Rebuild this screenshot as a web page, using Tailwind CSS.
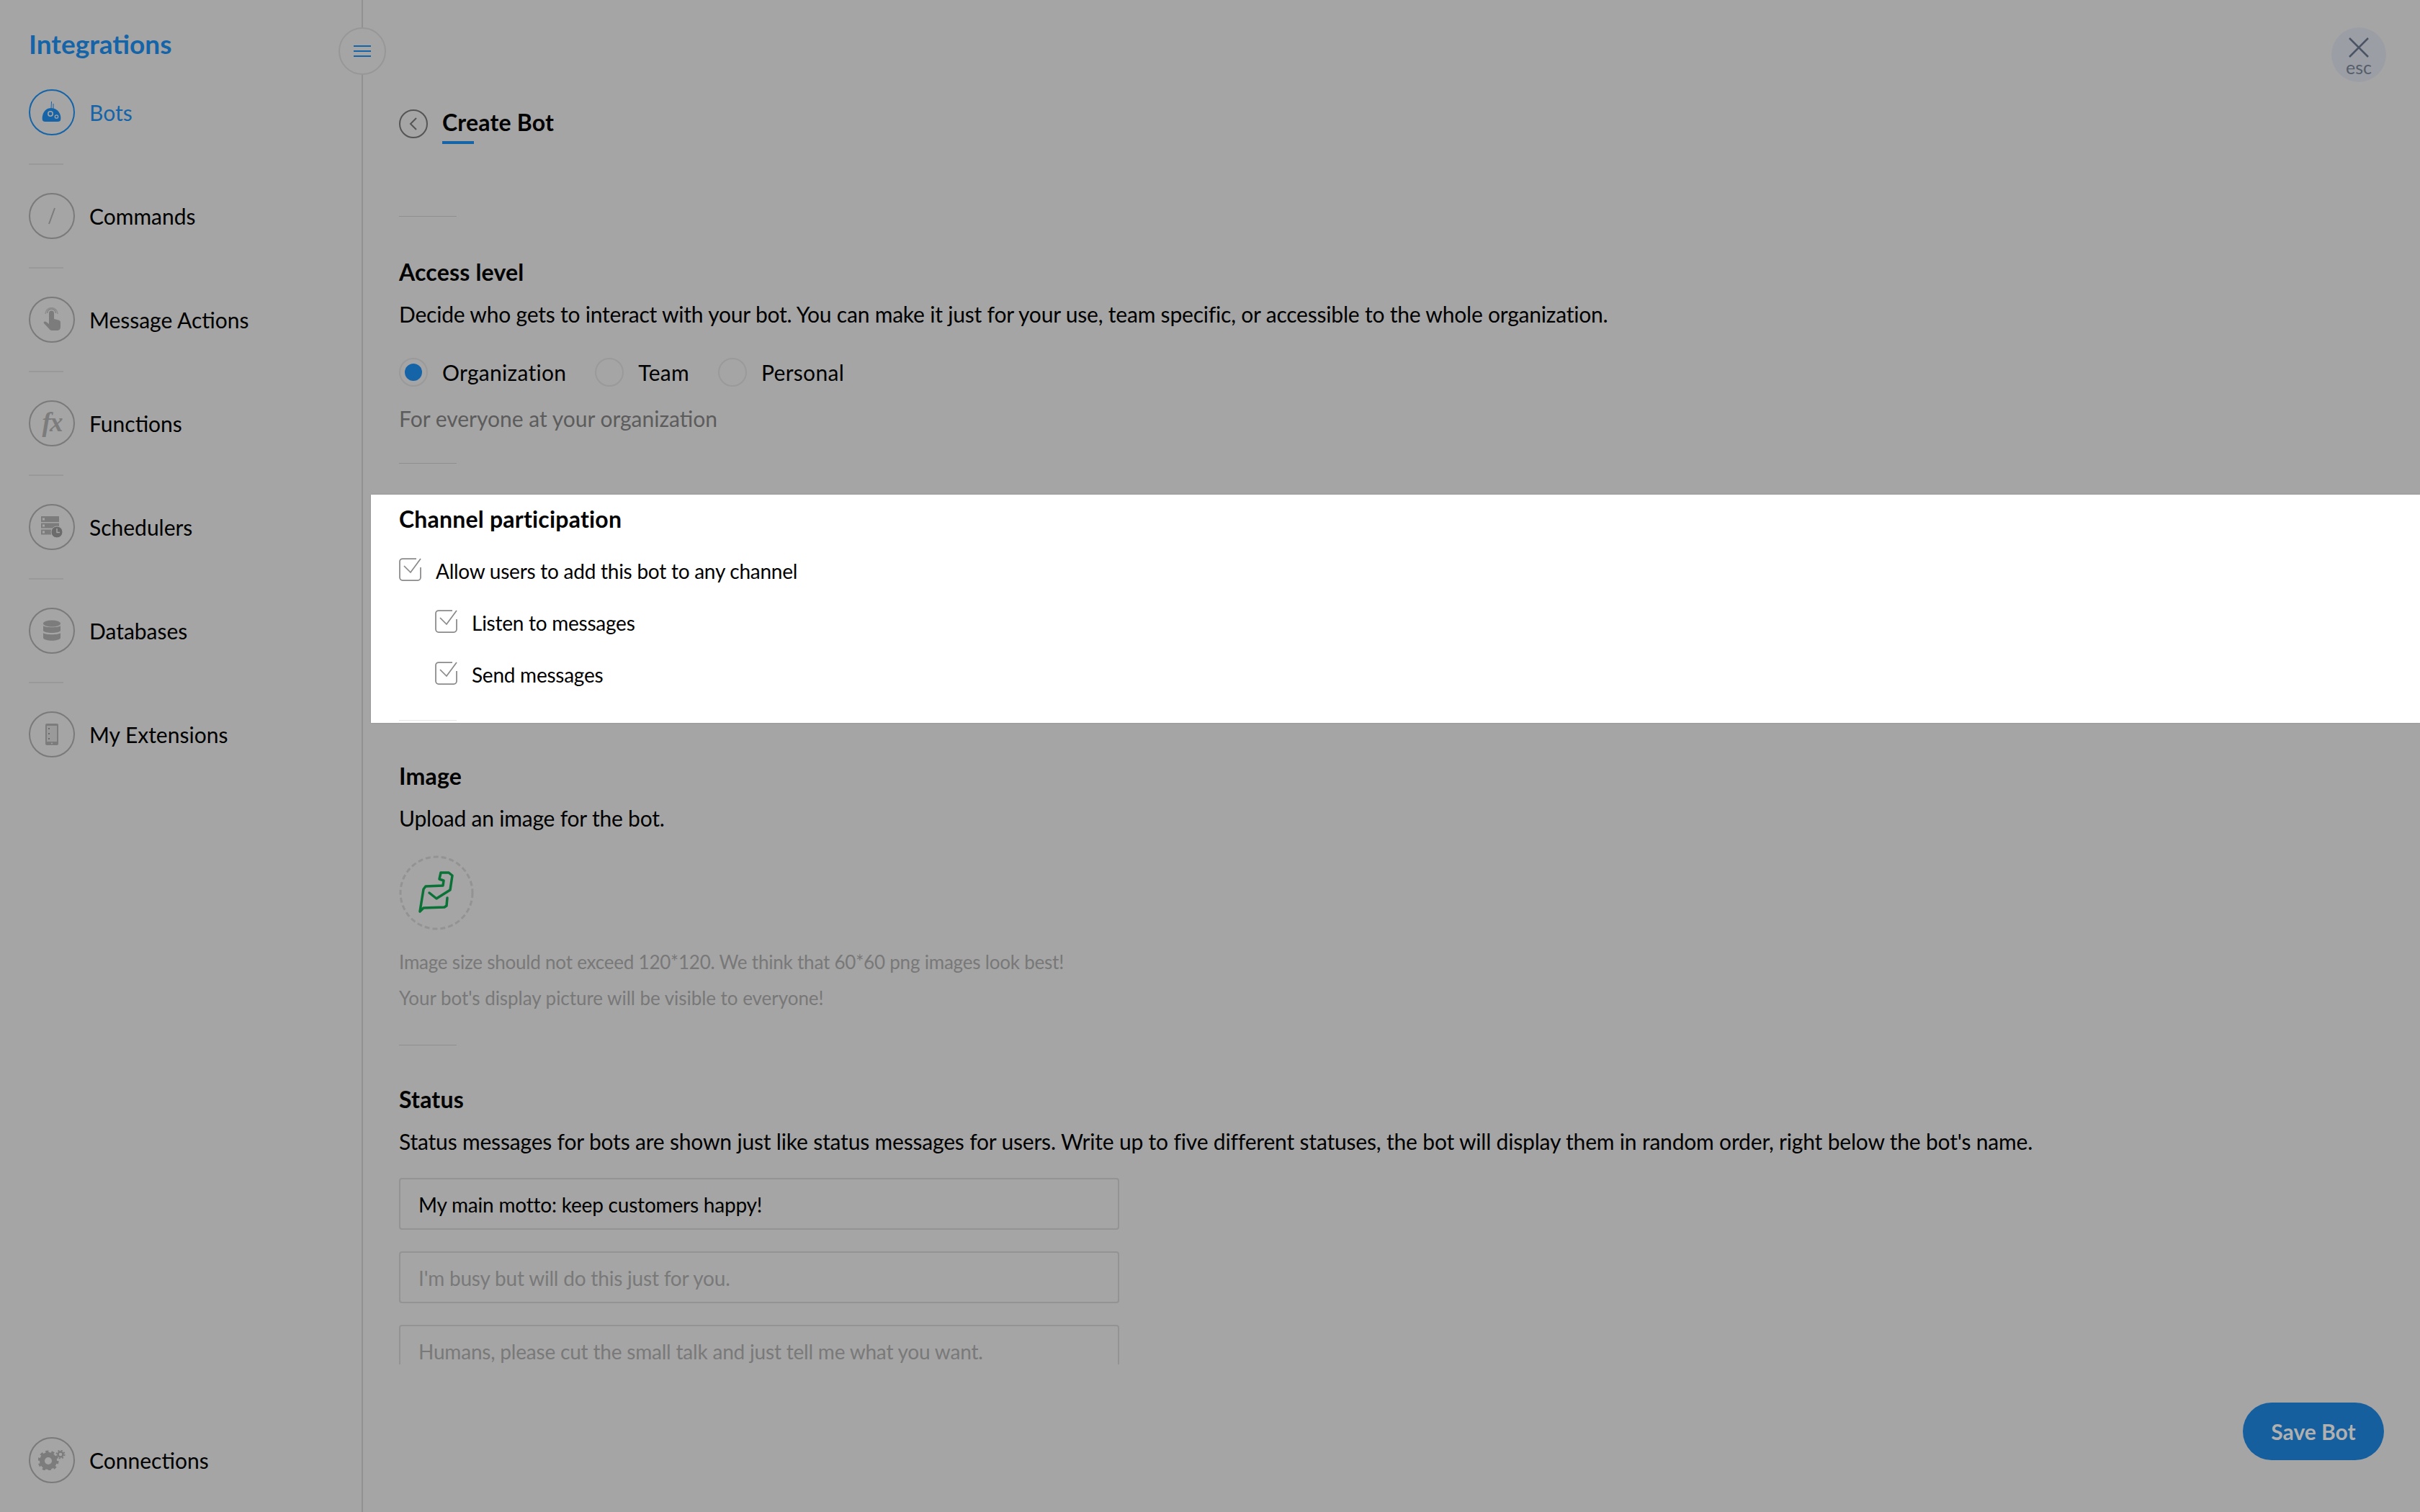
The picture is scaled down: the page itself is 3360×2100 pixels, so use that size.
<!DOCTYPE html>
<html lang="en">
<head>
  <meta charset="UTF-8">
  <meta name="viewport" content="width=device-width, initial-scale=1.0">
  <title>Create Bot</title>
  <script src="https://cdn.jsdelivr.net/npm/@tailwindcss/browser@4"></script>
</head>
<body class="bg-[#a5a5a5] text-black font-['Lato',sans-serif] w-[3360px] h-[2100px] overflow-hidden relative flex">

  <!-- Sidebar -->
  <aside class="w-[504px] h-full shrink-0 border-r-2 border-[#919191] pl-[40px] flex flex-col">
    <h1 class="mt-[40px] h-[44px] leading-[42px] text-[37px] font-bold text-[#1664a8]">Integrations</h1>
    <ul class="mt-[40px] flex flex-col text-[30px]">
      <li class="flex items-center gap-[20px] h-[64px] text-[#1664a8]">
        <span class="w-[64px] h-[64px] rounded-full border-2 border-[#1664a8] flex items-center justify-center">
          <svg width="30" height="34" viewBox="0 0 30 34"><path d="M14 12 14.5 2M17 12 17 5" stroke="#1664a8" stroke-width="1" fill="none"/><path d="M2 28C.5 22 4 11 14 11c9 0 15 9 13 17-1 2-3 2-6 2H7c-2 0-4 0-5-2z" fill="#1664a8"/><circle cx="13" cy="19" r="3.2" fill="none" stroke="#a5a5a5" stroke-width="1.6"/><circle cx="21.500" cy="23" r="2.200" fill="none" stroke="#a5a5a5" stroke-width="1.300"/></svg>
        </span>
        <span>Bots</span>
      </li>
      <li class="w-[48px] h-[2px] bg-[#999999] my-[39px]"></li>
      <li class="flex items-center gap-[20px] h-[64px]">
        <span class="w-[64px] h-[64px] rounded-full border-2 border-[#7a7a7a] flex items-center justify-center">
          <svg width="14" height="28" viewBox="0 0 14 28"><path d="M11 3 3 25" stroke="#7c7c7c" stroke-width="2" fill="none"/></svg>
        </span>
        <span>Commands</span>
      </li>
      <li class="w-[48px] h-[2px] bg-[#999999] my-[39px]"></li>
      <li class="flex items-center gap-[20px] h-[64px]">
        <span class="w-[64px] h-[64px] rounded-full border-2 border-[#7a7a7a] flex items-center justify-center">
          <svg width="28" height="34" viewBox="0 0 28 34"><path d="M7.500 8a6 6 0 0 1 12 0" stroke="#848484" stroke-width="1.500" fill="none"/><path d="M5 9a8.500 8.500 0 0 1 17 0" stroke="#8c8c8c" stroke-width="1.500" fill="none"/><path d="M10 8a3.500 3.500 0 0 1 7 0v8l6 1.500c2 .5 3 1.500 3 3.500v6c0 3-2 5-5 5h-7c-2 0-3-1-4-2.500L3 22c-1-2 1-3.500 3-2l4 3z" fill="#7c7c7c"/></svg>
        </span>
        <span>Message Actions</span>
      </li>
      <li class="w-[48px] h-[2px] bg-[#999999] my-[39px]"></li>
      <li class="flex items-center gap-[20px] h-[64px]">
        <span class="w-[64px] h-[64px] rounded-full border-2 border-[#7a7a7a] flex items-center justify-center">
          <span class="font-['Liberation_Serif',serif] italic font-bold text-[37px] tracking-[-2px] leading-none text-[#7c7c7c] pb-[4px]">fx</span>
        </span>
        <span>Functions</span>
      </li>
      <li class="w-[48px] h-[2px] bg-[#999999] my-[39px]"></li>
      <li class="flex items-center gap-[20px] h-[64px]">
        <span class="w-[64px] h-[64px] rounded-full border-2 border-[#7a7a7a] flex items-center justify-center">
          <svg width="32" height="32" viewBox="0 0 32 32"><rect x="1" y="1" width="25" height="8" fill="#7c7c7c"/><rect x="1" y="10.500" width="25" height="7" fill="#7c7c7c"/><rect x="1" y="19.500" width="14" height="7" fill="#7c7c7c"/><rect x="3" y="3.500" width="3" height="3" fill="#a5a5a5"/><rect x="3" y="12.500" width="3" height="3" fill="#a5a5a5"/><rect x="3" y="21.500" width="3" height="3" fill="#a5a5a5"/><circle cx="23" cy="23" r="8" fill="#6b6b6b" stroke="#a5a5a5" stroke-width="1"/><path d="M23 18v5.500h4" stroke="#a5a5a5" stroke-width="1.500" fill="none"/></svg>
        </span>
        <span>Schedulers</span>
      </li>
      <li class="w-[48px] h-[2px] bg-[#999999] my-[39px]"></li>
      <li class="flex items-center gap-[20px] h-[64px]">
        <span class="w-[64px] h-[64px] rounded-full border-2 border-[#7a7a7a] flex items-center justify-center">
          <svg width="26" height="30" viewBox="0 0 26 30"><ellipse cx="13" cy="5" rx="12" ry="4.500" fill="#7c7c7c"/><path d="M1 8c2 3 22 3 24 0v7c-2 4-22 4-24 0zM1 18c2 3 22 3 24 0v7c-2 5-22 5-24 0z" fill="#7c7c7c"/></svg>
        </span>
        <span>Databases</span>
      </li>
      <li class="w-[48px] h-[2px] bg-[#999999] my-[39px]"></li>
      <li class="flex items-center gap-[20px] h-[64px]">
        <span class="w-[64px] h-[64px] rounded-full border-2 border-[#7a7a7a] flex items-center justify-center">
          <svg width="20" height="30" viewBox="0 0 20 30"><rect x="1" y="0" width="18" height="30" rx="2" fill="#7c7c7c"/><rect x="3" y="3" width="14" height="22" fill="#9a9a9a"/><rect x="5" y="6" width="2" height="2" fill="#6b6b6b"/><rect x="5" y="13" width="2" height="2" fill="#6b6b6b"/><rect x="5" y="20" width="2" height="2" fill="#6b6b6b"/><circle cx="10" cy="27.500" r="1" fill="#a5a5a5"/></svg>
        </span>
        <span>My Extensions</span>
      </li>
    </ul>
    <div class="mt-auto mb-[40px] flex items-center gap-[20px] h-[64px] text-[30px]">
      <span class="w-[64px] h-[64px] rounded-full border-2 border-[#7a7a7a] flex items-center justify-center">
        <svg width="38" height="28" viewBox="0 0 38 28"><circle cx="14" cy="15" r="8.500" fill="none" stroke="#7c7c7c" stroke-width="7"/><circle cx="14" cy="15" r="12.500" fill="none" stroke="#7c7c7c" stroke-width="4" stroke-dasharray="4 3.850"/><circle cx="31" cy="6" r="3.500" fill="none" stroke="#7c7c7c" stroke-width="2.500"/><circle cx="31" cy="6" r="5.500" fill="none" stroke="#7c7c7c" stroke-width="2" stroke-dasharray="2 2.320"/></svg>
      </span>
      <span>Connections</span>
    </div>
  </aside>

  <!-- Sidebar toggle -->
  <button class="absolute left-[470px] top-[38px] w-[66px] h-[66px] rounded-full border-2 border-[#979797] bg-[#a5a5a5] flex flex-col items-center justify-center gap-[5px]">
    <span class="w-[24px] h-[2px] bg-[#1664a8]"></span>
    <span class="w-[24px] h-[2px] bg-[#1664a8]"></span>
    <span class="w-[24px] h-[2px] bg-[#1664a8]"></span>
  </button>

  <!-- Close -->
  <button class="absolute left-[3237px] top-[38px] w-[76px] h-[76px] rounded-full bg-[#9b9fa5] flex flex-col items-center pt-[13px]">
    <svg width="30" height="30" viewBox="0 0 30 30"><path d="M2 2 28 28M28 2 2 28" stroke="#4b5364" stroke-width="2.500" fill="none"/></svg>
    <span class="text-[25px] leading-[22px] text-[#565d6b] mt-[1px]">esc</span>
  </button>

  <!-- Main Content -->
  <main class="flex-1 flex flex-col">
    <div class="h-[1895px] overflow-hidden">

      <!-- Title -->
      <div class="pl-[50px] pt-[152px] flex items-start gap-[20px]">
        <span class="w-[40px] h-[40px] rounded-full border-2 border-[#555555] flex items-center justify-center">
          <svg width="12" height="20" viewBox="0 0 12 20"><path d="M10 2 2 10l8 8" stroke="#555555" stroke-width="2" fill="none"/></svg>
        </span>
        <div>
          <div class="h-[40px] leading-[36px] text-[32px] tracking-[0.2px] font-bold">Create Bot</div>
          <div class="w-[44px] h-[4px] bg-[#1664a8] mt-[4px]"></div>
        </div>
      </div>

      <div class="ml-[50px] mt-[100px] w-[80px] h-[1px] bg-[#8f8f8f]"></div>

      <!-- Access level -->
      <section class="pl-[50px] text-[30px] tracking-[-0.2px] leading-[40px]">
        <h2 class="mt-[58px] text-[32px] tracking-[0.2px] leading-[38px] font-bold">Access level</h2>
        <p class="mt-[19px]">Decide who gets to interact with your bot. You can make it just for your use, team specific, or accessible to the whole organization.</p>
        <div class="mt-[41px] flex items-center h-[40px] tracking-[0.3px]">
          <span class="w-[40px] h-[40px] rounded-full border-2 border-[#9a9a9a] flex items-center justify-center"><span class="w-[24px] h-[24px] rounded-full bg-[#1664a8]"></span></span>
          <span class="ml-[20px]">Organization</span>
          <span class="ml-[40px] w-[40px] h-[40px] rounded-full border-2 border-[#9a9a9a]"></span>
          <span class="ml-[20px]">Team</span>
          <span class="ml-[40px] w-[40px] h-[40px] rounded-full border-2 border-[#9a9a9a]"></span>
          <span class="ml-[20px]">Personal</span>
        </div>
        <p class="mt-[24px] tracking-normal text-[#5c5c5c]">For everyone at your organization</p>
        <div class="mt-[42px] w-[80px] h-[1px] bg-[#8f8f8f]"></div>
      </section>

      <!-- Channel participation -->
      <section class="ml-[11px] mt-[43px] h-[317px] bg-white pl-[39px] pt-[16px] text-[28px] tracking-[-0.25px] leading-[36px] shadow-[0_0_2px_rgba(0,0,0,0.15)]">
        <h2 class="text-[32px] tracking-[0.2px] font-bold">Channel participation</h2>
        <label class="mt-[36px] flex items-start gap-[19px]">
          <svg width="32" height="32" viewBox="0 0 32 32" class="shrink-0"><path d="M24 1H5a4 4 0 0 0-4 4v22a4 4 0 0 0 4 4h21a4 4 0 0 0 4-4V13" fill="none" stroke="#8a8a8a" stroke-width="1.750"/><path d="M7 11l9 9L30 1" fill="none" stroke="#8a8a8a" stroke-width="1.750"/></svg>
          <span>Allow users to add this bot to any channel</span>
        </label>
        <label class="mt-[36px] ml-[50px] flex items-start gap-[19px]">
          <svg width="32" height="32" viewBox="0 0 32 32" class="shrink-0"><path d="M24 1H5a4 4 0 0 0-4 4v22a4 4 0 0 0 4 4h21a4 4 0 0 0 4-4V13" fill="none" stroke="#8a8a8a" stroke-width="1.750"/><path d="M7 11l9 9L30 1" fill="none" stroke="#8a8a8a" stroke-width="1.750"/></svg>
          <span>Listen to messages</span>
        </label>
        <label class="mt-[36px] ml-[50px] flex items-start gap-[19px]">
          <svg width="32" height="32" viewBox="0 0 32 32" class="shrink-0"><path d="M24 1H5a4 4 0 0 0-4 4v22a4 4 0 0 0 4 4h21a4 4 0 0 0 4-4V13" fill="none" stroke="#8a8a8a" stroke-width="1.750"/><path d="M7 11l9 9L30 1" fill="none" stroke="#8a8a8a" stroke-width="1.750"/></svg>
          <span>Send messages</span>
        </label>
        <div class="mt-[45px] w-[80px] h-[1px] bg-[#e6e6e6]"></div>
      </section>

      <!-- Image -->
      <section class="pl-[50px] text-[30px] tracking-[-0.2px] leading-[40px]">
        <h2 class="mt-[55px] text-[32px] tracking-[0.2px] leading-[38px] font-bold">Image</h2>
        <p class="mt-[19px]">Upload an image for the bot.</p>
        <div class="mt-[32px] w-[104px] h-[104px]">
          <svg width="104" height="104" viewBox="0 0 104 104"><circle cx="52" cy="52" r="50" fill="none" stroke="#939393" stroke-width="3" stroke-dasharray="7 4"/><path d="M29 78 34 47 37 43 61 42 62 35 56 33 58 24 69 24 74 28 71 48 52 60 42 52M67 59 66 70 63 72 34 73 29 78" fill="none" stroke="#0a7236" stroke-width="3.500" stroke-linejoin="round" stroke-linecap="round"/></svg>
        </div>
        <p class="mt-[19px] text-[26px] tracking-[-0.21px] leading-[50px] text-[#787878]">Image size should not exceed 120*120. We think that 60*60 png images look best!</p>
        <p class="text-[26px] tracking-[-0.04px] leading-[50px] text-[#787878]">Your bot's display picture will be visible to everyone!</p>
        <div class="mt-[40px] w-[80px] h-[1px] bg-[#8f8f8f]"></div>
      </section>

      <!-- Status -->
      <section class="pl-[50px] text-[30px] tracking-[-0.18px] leading-[40px]">
        <h2 class="mt-[56px] text-[32px] tracking-[0.2px] leading-[38px] font-bold">Status</h2>
        <p class="mt-[19px]">Status messages for bots are shown just like status messages for users. Write up to five different statuses, the bot will display them in random order, right below the bot's name.</p>
        <div class="mt-[31px] w-[1000px] flex flex-col gap-[30px] text-[28px] tracking-[-0.2px]">
          <div class="h-[72px] pl-[25px] pt-[2px] flex items-center rounded-[4px] border-2 border-[#939393]">My main motto: keep customers happy!</div>
          <div class="h-[72px] pl-[25px] pt-[2px] flex items-center rounded-[4px] border-2 border-[#939393] text-[#797979]">I'm busy but will do this just for you.</div>
          <div class="h-[72px] pl-[25px] pt-[2px] flex items-center rounded-[4px] border-2 border-[#939393] text-[#797979]">Humans, please cut the small talk and just tell me what you want.</div>
        </div>
      </section>
    </div>

    <!-- Footer -->
    <div class="flex justify-end pr-[50px] pt-[53px]">
      <button class="w-[196px] h-[80px] rounded-full bg-[#155f9e] text-[#b0b0b0] text-[30px] font-bold">Save Bot</button>
    </div>
  </main>

</body>
</html>
